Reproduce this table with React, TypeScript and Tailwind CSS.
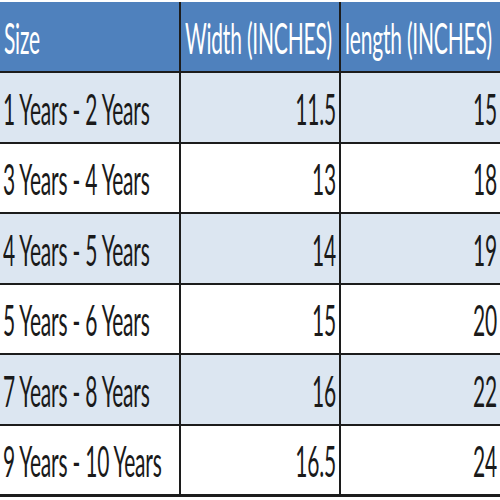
import React from "react";

const rows = [
  ["1 Years - 2 Years", "11.5", "15"],
  ["3 Years - 4 Years", "13", "18"],
  ["4 Years - 5 Years", "14", "19"],
  ["5 Years - 6 Years", "15", "20"],
  ["7 Years - 8 Years", "16", "22"],
  ["9 Years - 10 Years", "16.5", "24"],
];

function T({ children }: { children: React.ReactNode }) {
  return (
    <span className="inline-block origin-center scale-y-[2.05] leading-none whitespace-nowrap">
      {children}
    </span>
  );
}

export default function App() {
  return (
    <div
      className="w-[500px] h-[500px] bg-white overflow-hidden pt-[2px] text-[21px] tracking-[-0.2px]"
      style={{ fontFamily: "Lato, 'Open Sans', sans-serif" }}
    >
      <div className="grid grid-cols-[179px_2px_158px_2px_159px]">
        <div className="h-[69px] bg-[#4f81bd] text-white flex items-center pl-[4px]">
          <T>Size</T>
        </div>
        <div className="bg-[#1c1c1c]" />
        <div className="h-[69px] bg-[#4f81bd] text-white flex items-center pl-[4px]">
          <T>Width (INCHES)</T>
        </div>
        <div className="bg-[#1c1c1c]" />
        <div className="h-[69px] bg-[#4f81bd] text-white flex items-center pl-[4px]">
          <T>length (INCHES)</T>
        </div>
      </div>
      {rows.map((r, i) => (
        <div key={i}>
          <div className="h-[2px] bg-[#1c1c1c]" />
          <div
            className={
              "grid grid-cols-[179px_2px_158px_2px_159px] h-[68.5px] text-[#1a1a1a] " +
              (i % 2 === 0 ? "bg-[#dce6f1]" : "bg-white")
            }
          >
            <div className="flex items-center pl-[3px]">
              <T>{r[0]}</T>
            </div>
            <div className="bg-[#1c1c1c]" />
            <div className="flex items-center justify-end pr-[3px]">
              <T>{r[1]}</T>
            </div>
            <div className="bg-[#1c1c1c]" />
            <div className="flex items-center justify-end pr-[3px]">
              <T>{r[2]}</T>
            </div>
          </div>
        </div>
      ))}
      <div className="h-[3px] bg-[#1c1c1c]" />
    </div>
  );
}
